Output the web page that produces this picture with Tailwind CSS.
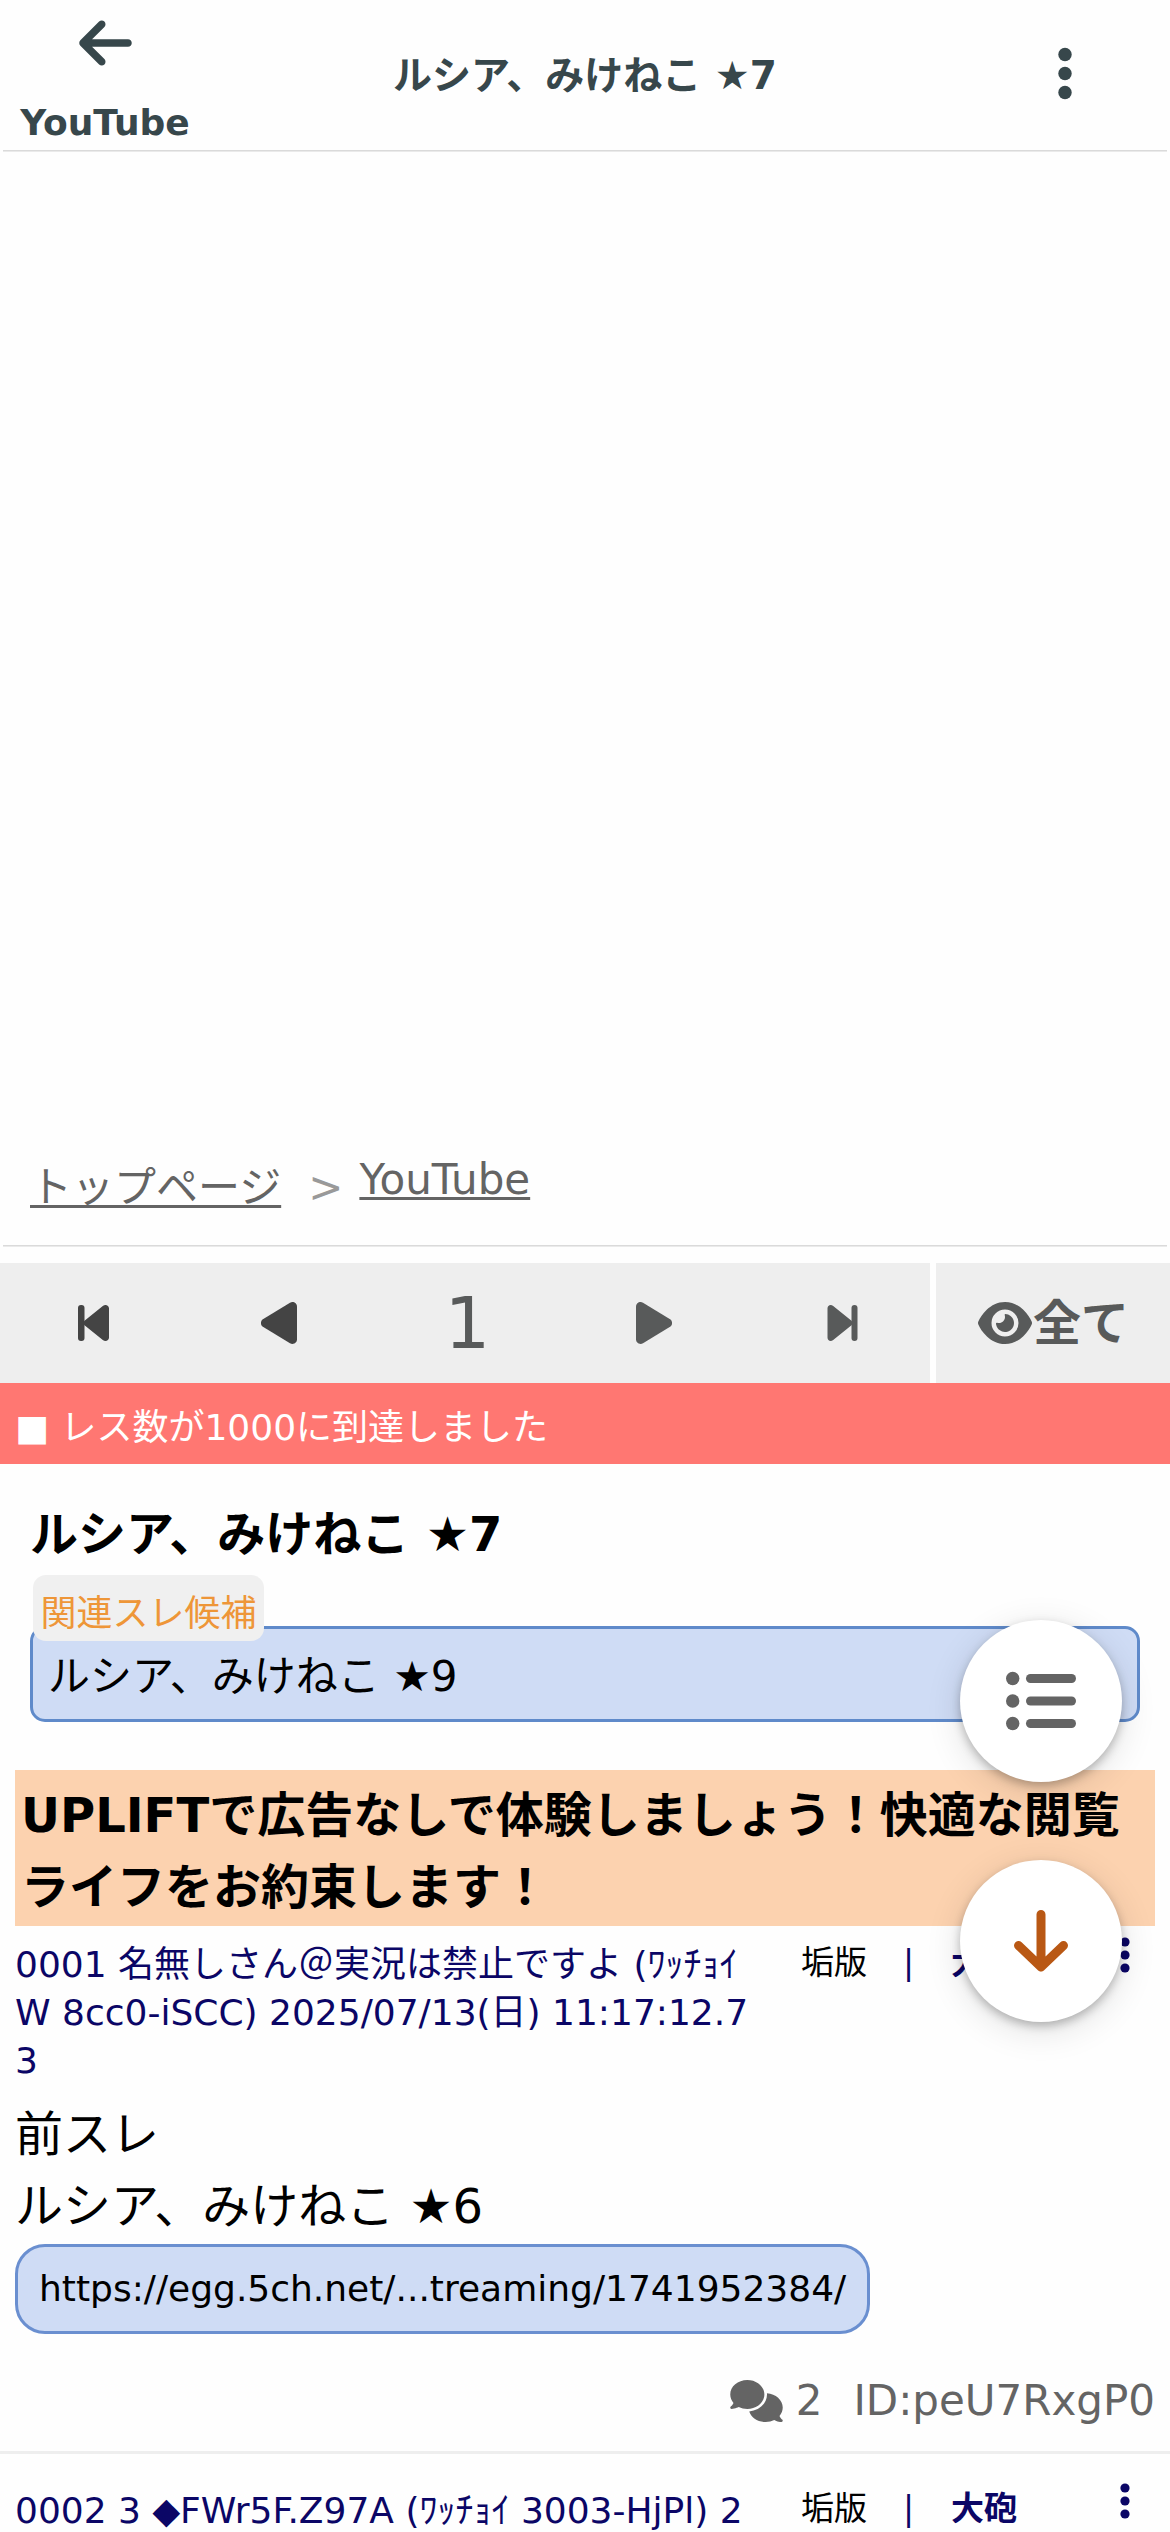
<!DOCTYPE html>
<html lang="ja">
<head>
<meta charset="utf-8">
<title>ルシア、みけねこ ★7</title>
<script src="https://cdn.jsdelivr.net/npm/@tailwindcss/browser@4"></script>
</head>
<body class="relative h-[2532px] w-[1170px] overflow-hidden bg-[#fefefe] text-black font-['DejaVu_Sans','Noto_Sans_CJK_JP',sans-serif]">

<header class="flex h-[150px] text-[#37474b] font-bold">
  <a class="flex w-[210px] flex-col items-center pt-[13px]">
    <svg class="h-[60px] w-[53px]" viewBox="0 0 448 512" fill="currentColor"><path d="M9.4 233.400c-12.500 12.500-12.500 32.800 0 45.300l160 160c12.500 12.500 32.800 12.500 45.300 0s12.500-32.800 0-45.300L109.200 288 416 288c17.700 0 32-14.300 32-32s-14.300-32-32-32l-306.700 0L214.600 118.600c12.500-12.500 12.500-32.800 0-45.300s-32.800-12.500-45.300 0l-160 160z"/></svg>
    <span class="mt-[26px] text-[36px] leading-[48px]">YouTube</span>
  </a>
  <h1 class="flex-1 pt-[46px] text-center text-[39px] leading-[60px]">ルシア、みけねこ ★7</h1>
  <div class="w-[210px] pt-[43px] pl-[95px]">
    <svg class="h-[61px] w-[20px]" viewBox="0 0 20 61" fill="currentColor"><circle cx="10" cy="11.500" r="6.700"/><circle cx="10" cy="30.500" r="6.700"/><circle cx="10" cy="49.500" r="6.700"/></svg>
  </div>
</header>
<div class="mx-[3px] h-[2px] border-t border-[#dadada] bg-[#eaeaea]"></div>

<div class="h-[998px]"></div>

<nav class="flex h-[95px] pl-[30px] text-[42px] leading-[60px] text-[#646464]">
  <a class="pt-[8px] underline decoration-[3px] underline-offset-[3px]">トップページ</a>
  <span class="pt-[8px] pl-[27px] text-[#999]">&gt;</span>
  <a class="ml-[16px] underline decoration-[3px] underline-offset-[3px]">YouTube</a>
</nav>
<div class="mx-[3px] h-[2px] border-t border-[#dadada] bg-[#eaeaea]"></div>

<section class="mt-[16px] flex h-[120px] gap-[6px] text-[#585a5a]">
  <div class="grid w-[930px] grid-cols-5 place-items-center bg-[#eee]">
    <svg class="h-[36px] w-[31px] text-[#444]" viewBox="0 0 31 36" fill="currentColor"><rect width="6.500" height="36" rx="3"/><path d="M6.500 15.800 24.800 1C27.500-1.200 31 .5 31 3.500V32.500C31 35.500 27.500 37.200 24.800 35L6.500 20.200C5.200 19 5.200 17 6.500 15.800Z"/></svg>
    <svg class="h-[42px] w-[36px] text-[#444]" viewBox="0 0 36 42" fill="currentColor"><path d="M1.900 17.200 29 .8C32-1 36 .9 36 4.700V37.300C36 41.100 32 43 29 41.200L1.900 24.800C-.7 23.200-.7 18.800 1.900 17.200Z"/></svg>
    <span class="ml-[5px] text-[72px] leading-[116px]">1</span>
    <svg class="ml-[6px] h-[42px] w-[36px]" viewBox="0 0 36 42" fill="currentColor"><path d="M34.100 17.200 7 .8C4-1 0 .9 0 4.700V37.300C0 41.100 4 43 7 41.200L34.100 24.800C36.700 23.200 36.700 18.800 34.100 17.200Z"/></svg>
    <svg class="ml-[10px] h-[36px] w-[31px]" viewBox="0 0 31 36" fill="currentColor"><rect x="24.500" width="6" height="36" rx="3"/><path d="M24.500 15.800 6.200 1C3.500-1.200.5.500.5 3.500V32.500C.5 35.500 3.500 37.200 6.200 35L24.500 20.200C25.800 19 25.800 17 24.500 15.800Z"/></svg>
  </div>
  <div class="flex flex-1 items-center bg-[#eee] pl-[42px] text-[48px] font-bold">
    <svg class="h-[48px] w-[54px]" viewBox="0 0 576 512" fill="currentColor"><path fill-rule="evenodd" d="M288 32c-80.800 0-145.500 36.800-192.600 80.600C48.600 156 17.300 208 2.500 243.700c-3.300 7.900-3.300 16.700 0 24.600C17.300 304 48.600 356 95.400 399.400C142.500 443.200 207.200 480 288 480s145.500-36.800 192.600-80.600c46.800-43.500 78.100-95.400 93-131.100c3.300-7.900 3.300-16.700 0-24.600c-14.900-35.700-46.200-87.700-93-131.100C433.500 68.800 368.800 32 288 32zM144 256a144 144 0 1 1 288 0 144 144 0 1 1 -288 0zm144-64c0 35.300-28.700 64-64 64c-7.100 0-13.900-1.200-20.300-3.300c-5.500-1.800-11.900 1.600-11.700 7.400c.3 6.900 1.300 13.800 3.200 20.700c13.700 51.200 66.400 81.600 117.600 67.900s81.600-66.400 67.900-117.600c-11.100-41.500-47.800-69.400-88.600-71.100c-5.800-.2-9.200 6.100-7.400 11.700c2.100 6.400 3.300 13.200 3.300 20.300z"/></svg>
    <span class="ml-[1px] leading-[116px]">全て</span>
  </div>
</section>

<p class="h-[81px] bg-[#ff7772] pt-[4px] pl-[15px] text-[36px] leading-[81px] text-white">■ レス数が1000に到達しました</p>

<main>
  <h2 class="mt-[34px] pl-[30px] text-[48px] leading-[72px] font-bold">ルシア、みけねこ ★7</h2>
  <section class="mt-[5px] px-[30px]">
    <h3 class="relative z-10 ml-[3px] h-[66px] w-[231px] rounded-[13px] bg-[#f0f0f0] pt-[6px] text-center text-[36px] leading-[66px] text-[#ee9638]">関連スレ候補</h3>
    <a class="-mt-[15px] block h-[96px] rounded-[15px] border-[3px] border-[#5f8aca] bg-[#cfdcf5] pt-[3px] pl-[15px] text-[42px] leading-[90px]">ルシア、みけねこ ★9</a>
  </section>

  <p class="mx-[15px] mt-[48px] h-[156px] bg-[#fcd2af] pt-[9px] pl-[6px] text-[48px] leading-[72px] font-bold whitespace-nowrap">UPLIFTで広告なしで体験しましょう！快適な閲覧<br>ライフをお約束します！</p>

  <article class="h-[528px] border-b-[3px] border-[#eee] px-[15px] pt-[15px]">
    <div class="flex h-[157px]">
      <p class="w-[786px] text-[36px] leading-[48px] text-[#0b0666]">0001 名無しさん＠実況は禁止ですよ (ﾜｯﾁｮｲ<br>W 8cc0-iSCC) 2025/07/13(日) 11:17:12.7<br>3</p>
      <div class="flex text-[33px] leading-[44px] text-[#0b0666]">
        <span class="w-[102px] text-black">垢版</span><span class="w-[48px]">|</span><b>大砲</b>
      </div>
      <svg class="mt-[-6px] ml-auto mr-[25px] h-[40px] w-[10px] text-[#0b0666]" viewBox="0 0 10 40" fill="currentColor"><circle cx="5" cy="7" r="4.600"/><circle cx="5" cy="20" r="4.600"/><circle cx="5" cy="33" r="4.600"/></svg>
    </div>
    <p class="text-[48px] leading-[72px]">前スレ<br>ルシア、みけねこ ★6</p>
    <a class="mt-[2px] flex h-[90px] w-fit items-center rounded-[30px] border-[3px] border-[#6a8fd0] bg-[#cfdcf5] px-[21px] text-[36px]">https://egg.5ch.net/...treaming/1741952384/</a>
    <div class="mt-[37px] flex h-[60px] items-center justify-end text-[42px] leading-[60px] text-[#646464]">
      <svg class="h-[42px] w-[53px]" viewBox="0 0 640 512" fill="currentColor"><path d="M208 352c114.900 0 208-78.800 208-176S322.900 0 208 0S0 78.800 0 176c0 38.600 14.700 74.300 39.600 103.400c-3.500 9.400-8.700 17.700-14.200 24.700c-4.800 6.200-9.700 11-13.300 14.300c-1.800 1.600-3.300 2.900-4.300 3.700c-.5.4-.9.7-1.100.8l-.2.2C1 327.200-1.400 334.400.8 340.900S9.100 352 16 352c21.800 0 43.800-5.600 62.100-12.500c9.200-3.500 17.800-7.400 25.200-11.400C134.100 343.300 169.800 352 208 352zM448 176c0 112.300-99.100 196.900-216.500 207C255.800 457.400 336.400 512 432 512c38.200 0 73.900-8.700 104.700-23.900c7.500 4 16 7.900 25.200 11.400c18.300 6.900 40.300 12.500 62.100 12.500c6.900 0 13.100-4.500 15.200-11.100c2.100-6.600-.2-13.800-5.800-17.900l-.2-.2c-.2-.2-.6-.4-1.100-.8c-1-.8-2.500-2-4.300-3.700c-3.600-3.300-8.500-8.100-13.300-14.300c-5.500-7-10.700-15.400-14.200-24.700c24.900-29 39.600-64.700 39.600-103.400c0-92.800-84.900-168.900-192.600-175.500c.4 5.100.6 10.300.6 15.500z"/></svg>
      <span class="ml-[13px]">2</span>
      <span class="ml-[31px]">ID:peU7RxgP0</span>
    </div>
  </article>

  <article class="flex px-[15px] pt-[33px]">
    <p class="w-[786px] text-[36px] leading-[48px] text-[#0b0666]">0002 3 ◆FWr5F.Z97A (ﾜｯﾁｮｲ 3003-HjPl) 2</p>
    <div class="flex text-[33px] leading-[44px] text-[#0b0666]">
      <span class="w-[102px] text-black">垢版</span><span class="w-[48px]">|</span><b>大砲</b>
    </div>
    <svg class="mt-[-6px] ml-auto mr-[25px] h-[40px] w-[10px] text-[#0b0666]" viewBox="0 0 10 40" fill="currentColor"><circle cx="5" cy="7" r="4.600"/><circle cx="5" cy="20" r="4.600"/><circle cx="5" cy="33" r="4.600"/></svg>
  </article>
</main>

<!-- floating action buttons -->
<div class="absolute top-[1620px] right-[48px] z-20 flex flex-col gap-[78px]">
  <button class="grid size-[162px] place-items-center rounded-full bg-white text-[#646464] shadow-[0_4px_10px_rgba(0,0,0,0.25),0_8px_36px_rgba(0,0,0,0.12)]">
    <svg class="h-[60px] w-[70px]" viewBox="0 0 70 60" fill="currentColor"><circle cx="6.700" cy="7.500" r="6.700"/><circle cx="6.700" cy="30" r="6.700"/><circle cx="6.700" cy="52.500" r="6.700"/><rect x="20" y="3" width="50" height="9" rx="4.500"/><rect x="20" y="25.500" width="50" height="9" rx="4.500"/><rect x="20" y="48" width="50" height="9" rx="4.500"/></svg>
  </button>
  <button class="grid size-[162px] place-items-center rounded-full bg-white text-[#b95814] shadow-[0_4px_10px_rgba(0,0,0,0.25),0_8px_36px_rgba(0,0,0,0.12)]">
    <svg class="h-[64px] w-[56px]" viewBox="0 0 56 64" fill="none" stroke="currentColor" stroke-width="9" stroke-linecap="round" stroke-linejoin="round"><path d="M28 5.500V58M5.500 36.500 28 58 50.500 36.500"/></svg>
  </button>
</div>
</body>
</html>
